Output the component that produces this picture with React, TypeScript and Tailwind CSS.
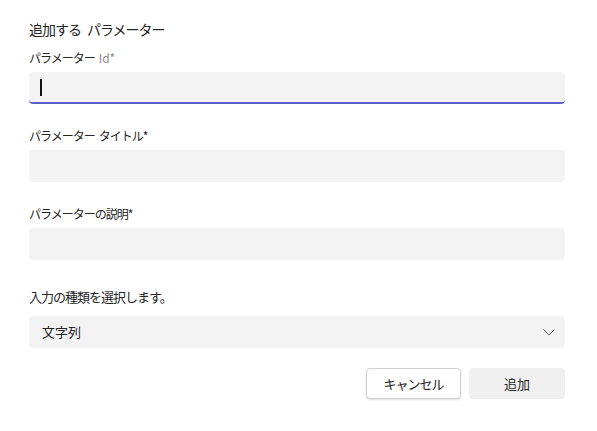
import React from "react";

const font = { fontFamily: '"Noto Sans CJK JP", "Noto Sans", sans-serif' };

export default function App() {
  return (
    <div className="w-[597px] h-[431px] bg-white" style={font}>
      <div className="pl-[29px] pr-[32px] pt-[19px]">
        <div className="h-[20px] text-[14px] leading-[20px] tracking-[-1px] text-[#242424]">
          追加する<span className="ml-[6px]">パラメーター</span>
        </div>

        <div className="mt-[11px] h-[16px] text-[12px] leading-[16px] tracking-[-1px] text-[#242424]">
          パラメーター<span className="ml-[4px] text-[#8a8a8a] tracking-normal">Id*</span>
        </div>
        <div className="mt-[6px] h-[32px] rounded-[4px] bg-[#f3f3f3] border-b-2 border-[#5b5fc7] flex items-center pl-[11px]">
          <span className="block w-[2px] h-[17px] bg-[#111]" />
        </div>

        <div className="mt-[24px] h-[16px] text-[12px] leading-[16px] tracking-[-1px] text-[#242424]">
          パラメーター<span className="ml-[4px]">タイトル*</span>
        </div>
        <div className="mt-[6px] h-[32px] rounded-[4px] bg-[#f3f3f3]" />

        <div className="mt-[24px] h-[16px] text-[12px] leading-[16px] tracking-[-1px] text-[#242424]">
          パラメーターの説明*
        </div>
        <div className="mt-[6px] h-[32px] rounded-[4px] bg-[#f3f3f3]" />

        <div className="mt-[28px] h-[18px] text-[13px] leading-[18px] tracking-[-1px] text-[#242424]">入力の種類を選択します。</div>
        <div className="mt-[10px] h-[32px] rounded-[4px] bg-[#f3f3f3] flex items-center justify-between pl-[13px] pr-[10px]">
          <span className="text-[13px] text-[#242424]">文字列</span>
          <svg width="12" height="7" viewBox="0 0 12 7" fill="none">
            <path d="M0.5 0.5 L6 6 L11.5 0.5" stroke="#616161" strokeWidth="1" />
          </svg>
        </div>

        <div className="mt-[20px] flex justify-end gap-[8px]">
          <button className="w-[95px] h-[31px] rounded-[4px] bg-white border border-[#d1d1d1] shadow-[0_1px_2px_rgba(0,0,0,0.12)] text-[13px] tracking-[-1px] text-[#242424] flex items-center justify-center">
            キャンセル
          </button>
          <button className="w-[96px] h-[31px] rounded-[4px] bg-[#f0f0f0] text-[13px] text-[#242424] flex items-center justify-center">
            追加
          </button>
        </div>
      </div>
    </div>
  );
}
